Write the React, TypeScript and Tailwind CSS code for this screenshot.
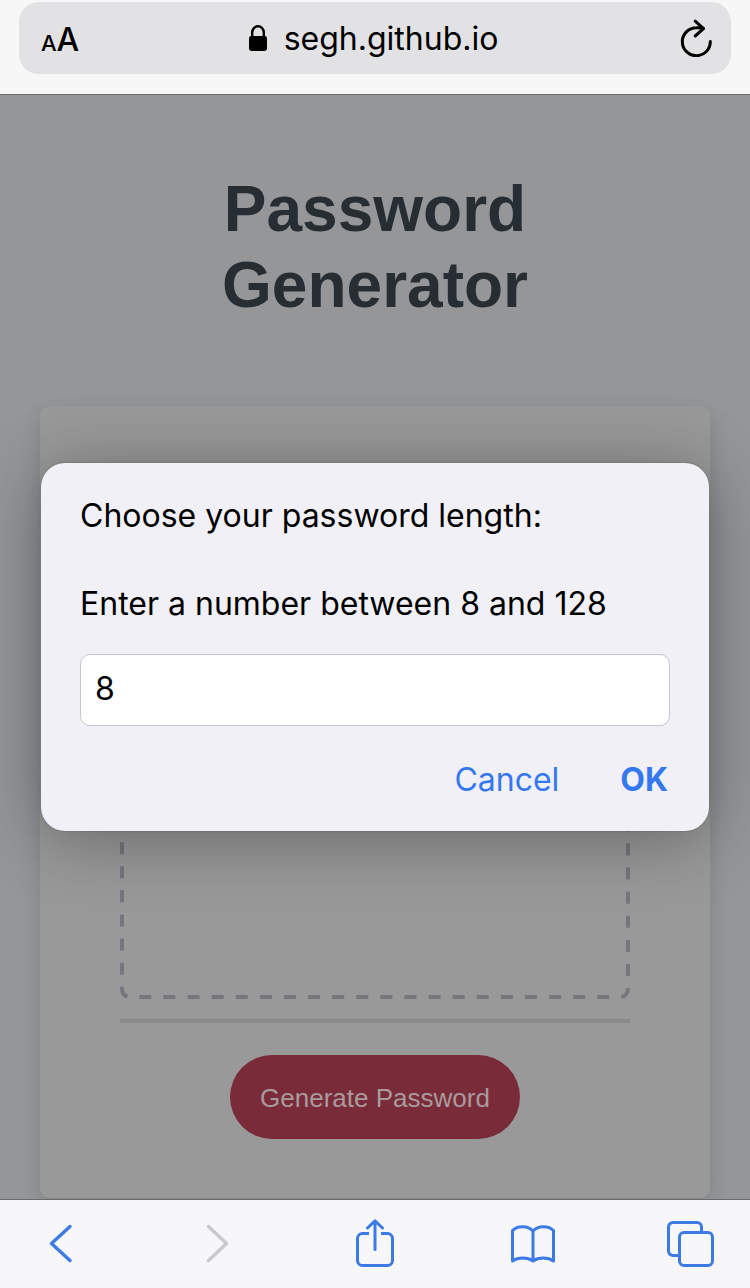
import { useState } from "react";

const iconStroke = {
  fill: "none",
  stroke: "currentColor",
  strokeWidth: 3,
  strokeLinecap: "round",
  strokeLinejoin: "round",
} as const;

function AddressBar() {
  return (
    <header className="border-b border-[#6a6a6c] bg-[#f7f7f8] px-[19px] pt-0.5 pb-5">
      <div className="flex h-18 items-center justify-between rounded-[20px] bg-[#e2e2e4] px-[18px] text-black">
        <button type="button" aria-label="Text size" className="flex w-14 items-baseline pt-1.5 pl-1 font-medium">
          <span className="text-[22px] leading-10">A</span>
          <span className="text-[32px] leading-10">A</span>
        </button>
        <div className="flex items-center gap-4 pt-0.5 pr-1">
          <svg viewBox="0 0 20 28" className="h-7 w-5" aria-hidden="true">
            <path d="M4.2 12V7.500a5.800 6.200 0 0 1 11.600 0V12" fill="none" stroke="currentColor" strokeWidth="2.4" />
            <rect x="1" y="11" width="18" height="15" rx="2.4" fill="currentColor" />
          </svg>
          <span className="text-[32px] leading-11">segh.github.io</span>
        </div>
        <button type="button" aria-label="Reload" className="flex w-14 justify-end">
          <svg viewBox="0 0 34 38" className="h-[38px] w-[34px]" {...iconStroke}>
            <path d="M31.300 22.500A14 14 0 1 1 17.300 8.700Q21 8.500 24.300 9.300" />
            <path d="M16.200 2.200l8.300 7.500-8.300 7.300" />
          </svg>
        </button>
      </div>
    </header>
  );
}

function PromptDialog() {
  const [length, setLength] = useState("8");
  return (
    <div className="absolute inset-0 flex items-center justify-center px-[41px]">
      <form
        role="dialog"
        aria-labelledby="prompt-label"
        onSubmit={(event) => event.preventDefault()}
        className="w-full max-w-3xl rounded-3xl bg-[#f1f0f7] px-[39px] pt-[31px] pb-[29px] text-[32px] leading-11 shadow-[0_0_2px_rgba(0,0,0,0.3),0_8px_70px_rgba(0,0,0,0.32)]"
      >
        <label id="prompt-label" htmlFor="password-length" className="flex flex-col gap-11 text-black">
          <span>Choose your password length:</span>
          <span>Enter a number between 8 and 128</span>
        </label>
        <input
          id="password-length"
          type="text"
          inputMode="numeric"
          value={length}
          onChange={(event) => setLength(event.target.value)}
          className="mt-7 block h-18 w-full rounded-[10px] border border-[#c6c6ca] bg-white px-3.5 pb-1 text-black outline-none"
        />
        <div className="mt-8 flex justify-end gap-[61px] pr-0.5 text-[#3478f0]">
          <button type="button">Cancel</button>
          <button type="submit" className="font-bold">
            OK
          </button>
        </div>
      </form>
    </div>
  );
}

function GeneratorPage() {
  return (
    <main className="relative flex-1 overflow-hidden bg-[#949698] px-10 pt-[76px] font-['Liberation_Sans',Arial,sans-serif]">
      <h1 className="px-10 text-center text-[64px] leading-[76px] font-bold text-[#262e33]">Password Generator</h1>
      <section className="mt-[83px] flex flex-col rounded-[10px] bg-[#999] px-20 pt-20 pb-[59px] shadow-[0_8px_20px_rgba(0,0,0,0.12)]">
        <div className="relative min-h-[513px]">
          <svg className="absolute inset-0 h-full w-full p-0.5 text-[#76777c]" overflow="visible" aria-hidden="true">
            <rect
              width="100%"
              height="100%"
              rx="8"
              fill="none"
              stroke="currentColor"
              strokeWidth="4"
              strokeDasharray="12 12.1"
              strokeDashoffset="-6.5"
            />
          </svg>
        </div>
        <hr className="mt-5 border-t-4 border-[#8b8b8b]" />
        <button
          type="button"
          className="mt-8 h-21 self-center rounded-full bg-[#7a2b39] px-[30px] pt-0.5 text-[26px] text-[#a99a9c]"
        >
          Generate Password
        </button>
      </section>
      <div className="font-[Inter,sans-serif]">
        <PromptDialog />
      </div>
    </main>
  );
}

function Toolbar() {
  return (
    <nav className="flex h-[89px] items-center justify-between border-t border-[#6a6a6c] bg-[#f7f7f9] px-[29px] text-[#3c7ae6]">
      <button type="button" aria-label="Back" className="flex w-16 justify-center">
        <svg viewBox="0 0 50 50" className="size-[50px]" {...iconStroke} strokeWidth={3.4}>
          <path d="M34 7.500l-18.500 17 18.500 17" />
        </svg>
      </button>
      <button type="button" aria-label="Forward" disabled className="flex w-16 justify-center text-[#c9c9cb]">
        <svg viewBox="0 0 50 50" className="size-[50px]" {...iconStroke} strokeWidth={3.4}>
          <path d="M15.500 7.500l18 17-18 17" />
        </svg>
      </button>
      <button type="button" aria-label="Share" className="flex w-16 justify-center">
        <svg viewBox="0 0 50 50" className="size-[50px]" {...iconStroke} strokeLinecap="butt">
          <path d="M19 14.500h-6.500a5 5 0 0 0-5 5v22a5 5 0 0 0 5 5h25a5 5 0 0 0 5-5v-22a5 5 0 0 0-5-5H31" />
          <path d="M25 2v28.500M17.500 9L25 1.800 32.500 9" strokeLinecap="round" />
        </svg>
      </button>
      <button type="button" aria-label="Bookmarks" className="flex w-16 justify-center">
        <svg viewBox="0 0 50 50" className="size-[50px]" {...iconStroke}>
          <path d="M26 12C21 6.300 10.500 6.300 5.500 11.500V42C11 38 20.500 38 26 42C31.500 38 41 38 46.500 42V11.500C41.500 6.300 31 6.300 26 12V42" />
        </svg>
      </button>
      <button type="button" aria-label="Tabs" className="flex w-16 justify-center">
        <svg viewBox="0 0 50 50" className="size-[50px]" overflow="visible" {...iconStroke} strokeLinecap="butt">
          <path d="M15.500 36.500H9a4.500 4.500 0 0 1-4.500-4.500V8A4.500 4.500 0 0 1 9 3.500h24A4.500 4.500 0 0 1 37.500 8v5.500" />
          <rect x="15.500" y="13.500" width="33" height="33" rx="4.500" />
        </svg>
      </button>
    </nav>
  );
}

export default function App() {
  return (
    <div className="flex min-h-screen flex-col font-[Inter,sans-serif]">
      <AddressBar />
      <GeneratorPage />
      <Toolbar />
    </div>
  );
}
